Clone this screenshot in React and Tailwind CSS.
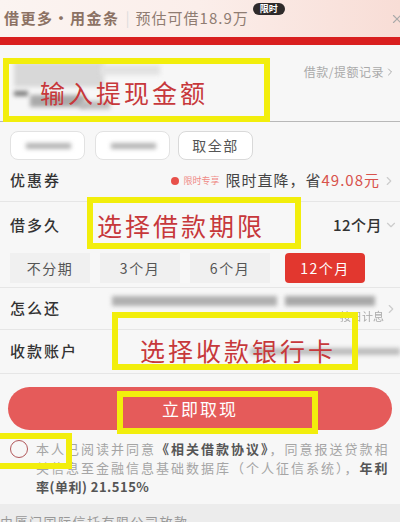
import { ChevronRight, ChevronDown, X } from 'lucide-react'

const font = { fontFamily: '"Noto Sans CJK SC", "Noto Sans", sans-serif' }

function Mark({ box, text, textClass }) {
  return (
    <div className={`absolute border-[6px] border-[#f2ee0c] ${box}`}>
      {text && <span className={`absolute whitespace-nowrap text-[25px] tracking-[3px] text-[#c7383b] ${textClass}`}>{text}</span>}
    </div>
  )
}

function Blur({ className }) {
  return <div className={`absolute bg-[#9a9a9a] blur-[2px] ${className}`} />
}

export default function App() {
  return (
    <div style={font} className="relative w-[400px] h-[522px] overflow-hidden bg-[#f7f7f7] text-[#333]">
      {/* header */}
      <div className="flex items-center h-[37px] pl-[4px] bg-gradient-to-r from-[#fbf4f1] via-[#fbeeea] to-[#f8ddd6]">
        <span className="text-[15px] font-bold tracking-[1.5px] text-[#8c7264]">借更多·用金条</span>
        <span className="ml-[6px] text-[15px] text-[#ddd]">|</span>
        <span className="ml-[6px] text-[15px] tracking-[1px] text-[#8f7c72]">预估可借18.9万</span>
        <span className="self-start mt-[3px] ml-[4px] h-[12px] px-[7px] rounded-full bg-[#2e2a2a] text-white text-[9px] leading-[12px] font-bold">限时</span>
        <X className="ml-auto -mr-[4px] w-[14px] h-[14px] text-[#aaa]" />
      </div>
      <div className="h-[8px] bg-[#d91f1f]" />

      {/* amount */}
      <div className="relative h-[77px] border-b border-[#b8b8b8]">
        <span className="absolute right-[4px] top-[18px] text-[12px] tracking-[0.5px] text-[#aaa] flex items-center">借款/提额记录<ChevronRight className="w-[12px] h-[12px]" /></span>
        <Blur className="left-[14px] top-[17px] w-[90px] h-[25px] bg-[#d8d8d8]" />
        <Blur className="left-[100px] top-[20px] w-[60px] h-[10px] bg-[#e2e2e2]" />
        <Blur className="left-[14px] top-[46px] w-[14px] h-[5px] bg-[#777]" />
        <Blur className="left-[30px] top-[50px] w-[55px] h-[12px] bg-[#aaa]" />
        <Blur className="left-[80px] top-[56px] w-[30px] h-[8px] bg-[#bbb]" />
      </div>

      {/* chips */}
      <div className="flex gap-[10px] pl-[10px] pt-[9px]">
        <div className="relative w-[75px] h-[29px] rounded-[8px] border border-[#e2e2e2] bg-white">
          <Blur className="left-[15px] top-[11px] w-[45px] h-[6px] bg-[#b5b5b5]" />
        </div>
        <div className="relative w-[75px] h-[29px] rounded-[8px] border border-[#e2e2e2] bg-white">
          <Blur className="left-[15px] top-[11px] w-[45px] h-[6px] bg-[#b5b5b5]" />
        </div>
        <div className="w-[75px] h-[29px] -ml-[2px] rounded-[8px] border border-[#d9d9d9] bg-white flex items-center justify-center text-[14px] tracking-[1.5px] text-[#555]">取全部</div>
      </div>

      {/* 优惠券 */}
      <div className="flex items-center h-[42px] mx-[0px] pl-[10px] pr-[4px] border-b border-[#e6e6e6]">
        <span className="text-[15px] font-medium tracking-[2px]">优惠券</span>
        <span className="ml-auto w-[8px] h-[8px] rounded-full bg-[#e8504a]" />
        <span className="ml-[4px] text-[9px] text-[#ef8a86]">限时专享</span>
        <span className="ml-[6px] text-[15px] tracking-[1px] text-[#444]">限时直降，省<span className="text-[#d8524c]">49.08元</span></span>
        <ChevronRight className="ml-[2px] w-[14px] h-[14px] text-[#ccc]" />
      </div>

      {/* 借多久 */}
      <div className="flex items-center h-[46px] pl-[10px] pr-[2px]">
        <span className="text-[15px] font-medium tracking-[2px]">借多久</span>
        <span className="ml-auto text-[15px] font-medium tracking-[0.5px]">12个月</span>
        <ChevronDown className="ml-[2px] w-[14px] h-[14px] text-[#ccc]" />
      </div>
      <div className="flex pl-[10px] mt-[5px] text-[14px] tracking-[1.5px]">
        <div className="w-[80px] h-[30px] bg-[#f0f0f0] flex items-center justify-center text-[#555]">不分期</div>
        <div className="ml-[10px] w-[80px] h-[30px] bg-[#f0f0f0] flex items-center justify-center text-[#555]">3个月</div>
        <div className="ml-[10px] w-[80px] h-[30px] bg-[#f0f0f0] flex items-center justify-center text-[#555]">6个月</div>
        <div className="ml-[15px] w-[80px] h-[30px] rounded-[4px] bg-[#e2372f] flex items-center justify-center text-white">12个月</div>
      </div>
      <div className="mt-[4px] border-b border-[#e6e6e6]" />

      {/* 怎么还 */}
      <div className="relative flex items-center h-[42px] pl-[10px] pr-[2px] border-b border-[#e6e6e6]">
        <span className="text-[15px] font-medium tracking-[2px]">怎么还</span>
        <Blur className="left-[112px] top-[8px] w-[165px] h-[10px] bg-[#b0b0b0]" />
        <Blur className="left-[285px] top-[8px] w-[90px] h-[10px] bg-[#a8a8a8]" />
        <span className="absolute right-[16px] top-[20px] text-[11px] text-[#aaa] blur-[0.6px]">按日计息</span>
        <ChevronRight className="ml-auto w-[14px] h-[14px] text-[#ccc]" />
      </div>

      {/* 收款账户 */}
      <div className="relative flex items-center h-[44px] pl-[10px] border-b border-[#e6e6e6]">
        <span className="text-[15px] font-medium tracking-[2px]">收款账户</span>
        <Blur className="left-[250px] top-[18px] w-[150px] h-[7px] bg-[#bcbcbc]" />
      </div>

      {/* button */}
      <div className="mx-[8px] mt-[13px] h-[43px] rounded-full bg-[#e55b5a] flex items-center justify-center text-white text-[17px] tracking-[2px]">立即取现</div>

      {/* agreement */}
      <div className="flex mt-[9px] pl-[10px] pr-[4px]">
        <span className="mt-[1px] w-[18px] h-[18px] shrink-0 rounded-full border-[1.5px] border-[#b1575a]" />
        <div className="ml-[8px] text-[13px] leading-[19px] tracking-[2px] text-[#a5a5a5] whitespace-nowrap">
          <div>本人已阅读并同意<b className="text-[#555]">《相关借款协议》</b>，同意报送贷款相</div>
          <div>关信息至金融信息基础数据库（个人征信系统），<b className="text-[#555]">年利</b></div>
          <div><b className="text-[#555] tracking-[0.5px]">率(单利) 21.515%</b></div>
        </div>
      </div>

      {/* footer */}
      <div className="mt-[8px] h-[40px] bg-[#ececec] pt-[8px] text-[13px] tracking-[1.5px] text-[#999] whitespace-nowrap">由厦门国际信托有限公司放款</div>

      {/* annotation overlays */}
      <Mark box="left-[3px] top-[58px] w-[267px] h-[64px]" text="输入提现金额" textClass="left-[31px] top-[10px]" />
      <Mark box="left-[87px] top-[197px] w-[214px] h-[52px]" text="选择借款期限" textClass="left-[4px] top-[4px]" />
      <Mark box="left-[112px] top-[312px] w-[246px] h-[58px]" text="选择收款银行卡" textClass="left-[22px] top-[14px]" />
      <Mark box="left-[117px] top-[391px] w-[201px] h-[43px]" />
      <Mark box="-left-[6px] top-[433px] w-[78px] h-[36px]" />
    </div>
  )
}
